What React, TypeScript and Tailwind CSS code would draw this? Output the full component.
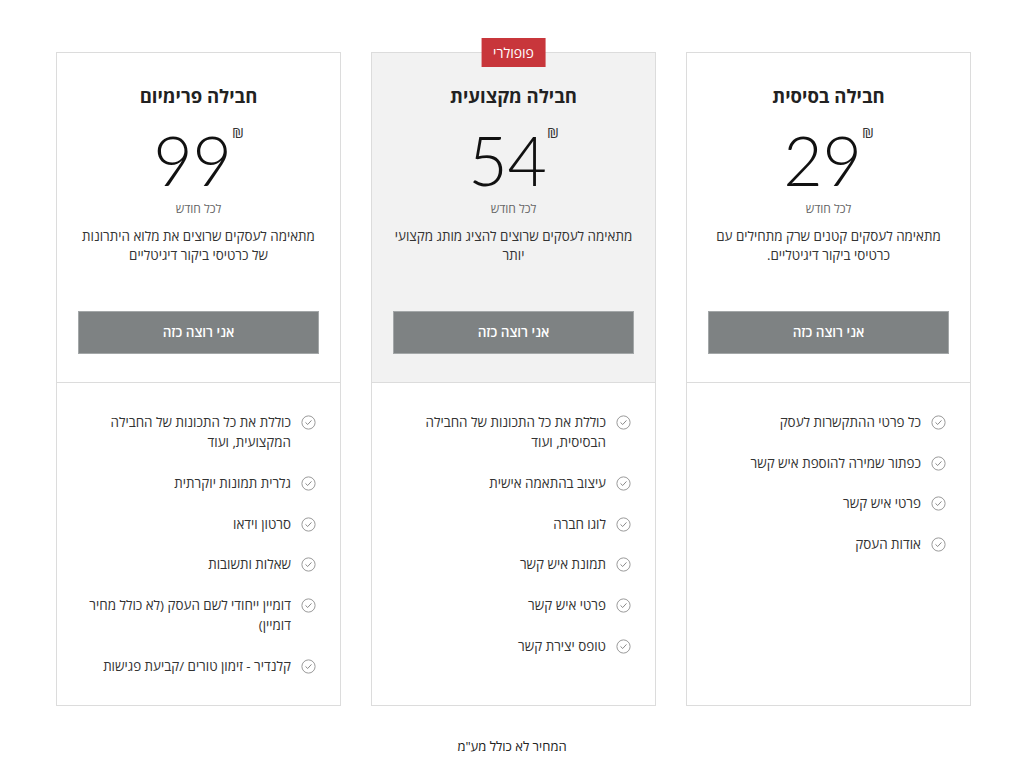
import React from "react";

type Plan = {
  title: string;
  price: string;
  desc: string;
  features: string[];
  popular?: boolean;
};

const plans: Plan[] = [
  {
    title: "חבילה בסיסית",
    price: "29",
    desc: "מתאימה לעסקים קטנים שרק מתחילים עם כרטיסי ביקור דיגיטליים.",
    features: ["כל פרטי ההתקשרות לעסק", "כפתור שמירה להוספת איש קשר", "פרטי איש קשר", "אודות העסק"],
  },
  {
    title: "חבילה מקצועית",
    price: "54",
    desc: "מתאימה לעסקים שרוצים להציג מותג מקצועי יותר",
    popular: true,
    features: [
      "כוללת את כל התכונות של החבילה הבסיסית, ועוד",
      "עיצוב בהתאמה אישית",
      "לוגו חברה",
      "תמונת איש קשר",
      "פרטי איש קשר",
      "טופס יצירת קשר",
    ],
  },
  {
    title: "חבילה פרימיום",
    price: "99",
    desc: "מתאימה לעסקים שרוצים את מלוא היתרונות של כרטיסי ביקור דיגיטליים",
    features: [
      "כוללת את כל התכונות של החבילה המקצועית, ועוד",
      "גלרית תמונות יוקרתית",
      "סרטון וידאו",
      "שאלות ותשובות",
      "דומיין ייחודי לשם העסק (לא כולל מחיר דומיין)",
      "קלנדיר - זימון טורים /קביעת פגישות",
    ],
  },
];

function CheckIcon() {
  return (
    <svg width="15" height="15" viewBox="0 0 15 15" fill="none" className="shrink-0">
      <circle cx="7.5" cy="7.5" r="6.6" stroke="#9a9a9a" strokeWidth="1" />
      <path d="M4.8 7.7 L6.7 9.5 L10.2 5.7" stroke="#8a8a8a" strokeWidth="1" strokeLinecap="round" strokeLinejoin="round" />
    </svg>
  );
}

function PlanCard({ plan }: { plan: Plan }) {
  return (
    <div className="relative flex h-[654px] w-[285px] flex-col border border-[#dcdcdc] bg-white">
      {plan.popular && (
        <div className="absolute left-1/2 top-[-15px] flex h-[29px] -translate-x-1/2 items-center bg-[#c8363b] px-[12px] text-[14px] text-white">
          פופולרי
        </div>
      )}
      <div
        className={`flex h-[330px] flex-col items-center border-b border-[#dcdcdc] px-[21px] pt-[31px] pb-[28px] ${
          plan.popular ? "bg-[#f2f2f2]" : "bg-white"
        }`}
      >
        <h2 className="text-[18.5px] font-bold leading-6 text-[#222]">{plan.title}</h2>
        <div dir="ltr" className="mt-[18px] flex items-start">
          <span className="font-['Lato'] text-[68px] font-light leading-[68px] text-[#111]">{plan.price}</span>
          <span className="mt-[-2px] text-[15px] leading-4 text-[#333]">₪</span>
        </div>
        <div className="mt-[7px] text-[12px] leading-4 text-[#666]">לכל חודש</div>
        <p className="mt-[10px] text-center text-[13.4px] leading-[19px] text-[#333]">{plan.desc}</p>
        <button className="mt-auto h-[43px] w-full border border-[#a3a7a8] bg-[#7e8283] text-[13.5px] font-semibold text-white">
          אני רוצה כזה
        </button>
      </div>
      <ul className="flex flex-col gap-[20.4px] pt-[29px] pr-[24px] pl-[22px]">
        {plan.features.map((f) => (
          <li key={f} className="flex items-start gap-[10px] text-[13.4px] leading-[20.3px] text-[#333]">
            <span className="mt-[3px]">
              <CheckIcon />
            </span>
            <span>{f}</span>
          </li>
        ))}
      </ul>
    </div>
  );
}

export default function App() {
  return (
    <div dir="rtl" className="min-h-[773px] bg-white pt-[52px] font-['Open_Sans',sans-serif]">
      <div className="ml-[56px] mr-auto flex w-[915px] justify-between">
        {plans.map((p) => (
          <PlanCard key={p.title} plan={p} />
        ))}
      </div>
      <p className="mt-[32px] text-center text-[13px] leading-4 text-[#222]">המחיר לא כולל מע"מ</p>
    </div>
  );
}
